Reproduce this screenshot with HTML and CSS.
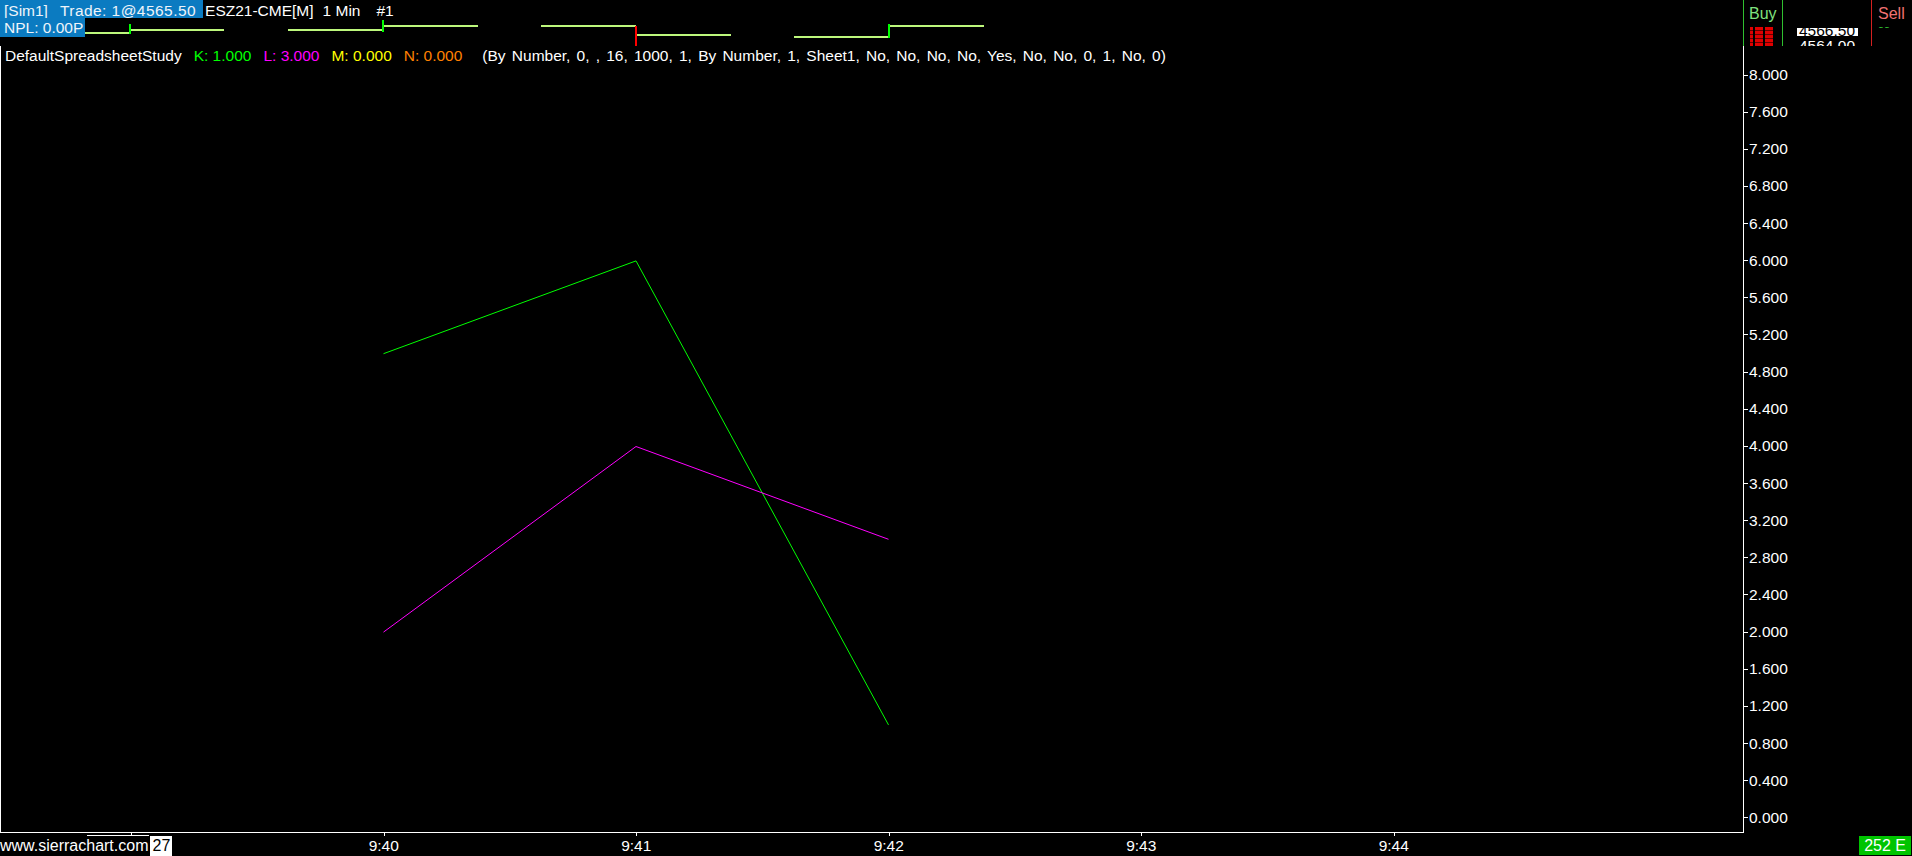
FILE: index.html
```html
<!DOCTYPE html>
<html lang="en">
<head>
    <meta charset="UTF-8">
    <title>Sierra Chart - ESZ21-CME[M] 1 Min #1</title>
    <link rel="stylesheet" href="styles.css">
</head>
<body>
<div class="chart">

    <div class="top">
        <div class="info">
            <div class="info-row row1">
                <span class="hl"><span>[Sim1]</span><span class="trade">Trade: 1@4565.50</span></span>
                <span class="sym">ESZ21-CME[M]</span>
                <span class="period">1 Min</span>
                <span class="num">#1</span>
            </div>
            <div class="info-row row2">
                <span class="hl">NPL: 0.00P</span>
            </div>

            <!-- mini bar steps -->
            <svg class="steps" width="1000" height="46" viewBox="0 0 1000 46">
                <g stroke="#bdf77c" stroke-width="2" fill="none">
                    <line x1="85" y1="33" x2="130" y2="33"/>
                    <line x1="130" y1="30" x2="224" y2="30"/>
                    <line x1="288" y1="30" x2="383" y2="30"/>
                    <line x1="383" y1="26" x2="478" y2="26"/>
                    <line x1="541" y1="26" x2="636" y2="26"/>
                    <line x1="636" y1="35" x2="731" y2="35"/>
                    <line x1="794" y1="37" x2="889" y2="37"/>
                    <line x1="889" y1="26" x2="984" y2="26"/>
                </g>
                <g stroke-width="2">
                    <line x1="130" y1="24" x2="130" y2="34" stroke="#00ff00"/>
                    <line x1="383" y1="20" x2="383" y2="32" stroke="#00ff00"/>
                    <line x1="636" y1="26" x2="636" y2="46" stroke="#ff0000"/>
                    <line x1="889" y1="24" x2="889" y2="38" stroke="#00ff00"/>
                </g>
            </svg>
        </div>

        <div class="dom">
            <div class="dom-col buy">
                <div class="dom-head">Buy</div>
                <div class="buy-qty"><span class="q1"></span><span class="q2"></span><span class="q2"></span></div>
            </div>
            <div class="dom-col price">
                <div class="ask"><span>4566.50</span></div>
                <div class="bid">4564.00</div>
            </div>
            <div class="dom-col sell">
                <div class="dom-head">Sell</div>
                <div class="sell-qty"><span>33</span></div>
            </div>
        </div>
    </div>

    <div class="main">
        <div class="plot">
            <div class="legend">
                <span class="study">DefaultSpreadsheetStudy</span>
                <span class="k">K: 1.000</span>
                <span class="l">L: 3.000</span>
                <span class="m">M: 0.000</span>
                <span class="n">N: 0.000</span>
                <span class="params">(By Number, 0, , 16, 1000, 1, By Number, 1, Sheet1, No, No, No, No, Yes, No, No, 0, 1, No, 0)</span>
            </div>
            <svg class="lines" width="1742" height="786" viewBox="0 0 1742 786">
                <polyline points="382.5,307.7 635,214.9 887.5,678.9" stroke="#00ff00" stroke-width="1" fill="none"/>
                <polyline points="382.5,586.1 635,400.5 887.5,493.3" stroke="#ff00ff" stroke-width="1" fill="none"/>
            </svg>
        </div>
        <div class="scale">
            <div class="price-label">8.000</div>
            <div class="price-label">7.600</div>
            <div class="price-label">7.200</div>
            <div class="price-label">6.800</div>
            <div class="price-label">6.400</div>
            <div class="price-label">6.000</div>
            <div class="price-label">5.600</div>
            <div class="price-label">5.200</div>
            <div class="price-label">4.800</div>
            <div class="price-label">4.400</div>
            <div class="price-label">4.000</div>
            <div class="price-label">3.600</div>
            <div class="price-label">3.200</div>
            <div class="price-label">2.800</div>
            <div class="price-label">2.400</div>
            <div class="price-label">2.000</div>
            <div class="price-label">1.600</div>
            <div class="price-label">1.200</div>
            <div class="price-label">0.800</div>
            <div class="price-label">0.400</div>
            <div class="price-label">0.000</div>
        </div>
    </div>

    <div class="bottom">
        <div class="timeaxis">
            <div class="time"></div>
            <div class="time">9:40</div>
            <div class="time">9:41</div>
            <div class="time">9:42</div>
            <div class="time">9:43</div>
            <div class="time">9:44</div>
        </div>
        <div class="brand">
            <span class="scroll-line"></span>
            <span>www.sierrachart.com</span><span class="bars">27</span>
        </div>
        <div class="counter">252 E</div>
    </div>

</div>
</body>
</html>
```

FILE: styles.css
```css
html, body {
    margin: 0;
    padding: 0;
    background-color: #000;
}

body {
    font-family: "Liberation Sans", Arial, sans-serif;
    font-size: 15.5px;
    color: #fff;
    overflow: hidden;
}

.chart {
    width: 1912px;
    height: 856px;
    display: flex;
    flex-direction: column;
}

/* ---- top strip ---- */

.top {
    height: 46px;
    display: flex;
}

.info {
    width: 1743px;
    position: relative;
    white-space: nowrap;
}

.info-row {
    display: flex;
}

.row1 {
    height: 18px;
    line-height: 22px;
}

.row2 {
    height: 19px;
    line-height: 20px;
}

.hl {
    display: inline-block;
    background-color: #0b7bc1;
    color: #eef4fa;
    padding-left: 4px;
}

.row1 .hl {
    height: 18px;
    padding-right: 7px;
}

.row2 .hl {
    height: 19px;
    padding-right: 2px;
}

.trade {
    margin-left: 12px;
    letter-spacing: 0.45px;
}

.sym {
    margin-left: 2px;
}

.period {
    margin-left: 9px;
}

.num {
    margin-left: 16px;
}

.steps {
    position: absolute;
    top: 0;
    left: 0;
}

.dom {
    flex: 1;
    display: flex;
    border-left: 1px solid #2fbf2f;
    overflow: hidden;
}

.dom-col {
    height: 46px;
    overflow: hidden;
}

.buy {
    width: 38px;
    border-right: 1px solid #2fbf2f;
}

.price {
    width: 88px;
    border-right: 1px solid #d42020;
}

.sell {
    flex: 1;
}

.dom-head {
    height: 27px;
    line-height: 28px;
    padding-left: 5px;
    font-size: 16px;
}

.buy .dom-head {
    color: #7fe27f;
}

.sell .dom-head {
    color: #f07272;
    padding-left: 6px;
}

.buy-qty {
    display: flex;
    gap: 2px;
    padding-left: 6px;
    height: 19px;
}

.buy-qty span {
    display: block;
    background-color: #e00000;
    background-image: repeating-linear-gradient(180deg, transparent 0 3px, rgba(0,0,0,0.55) 3px 4px);
}

.q1 {
    width: 3px;
}

.q2 {
    width: 8px;
}

.ask {
    width: 61px;
    height: 8px;
    margin: 28px auto 0;
    background-color: #fff;
    color: #000;
    overflow: hidden;
    text-align: center;
}

.ask span {
    display: block;
    line-height: 18px;
    margin-top: -6px;
}

.bid {
    text-align: center;
    line-height: 18px;
    margin-top: 1px;
}

.sell-qty {
    height: 3px;
    overflow: hidden;
    padding-left: 6px;
    color: #2fbf2f;
    font-size: 11px;
}

.sell-qty span {
    display: block;
    line-height: 12px;
    margin-top: -9px;
}

/* ---- chart area ---- */

.main {
    height: 787px;
    display: flex;
}

.plot {
    width: 1742px;
    height: 786px;
    border-left: 1px solid #fff;
    border-right: 1px solid #fff;
    border-bottom: 1px solid #fff;
    position: relative;
}

.legend {
    display: flex;
    gap: 12px;
    line-height: 19px;
    padding-left: 4px;
    white-space: nowrap;
    position: relative;
    z-index: 2;
}

.k { color: #00ff00; }
.l { color: #ff00ff; }
.m { color: #ffff00; }
.n { color: #ff8000; }

.params {
    margin-left: 8px;
    word-spacing: 1.9px;
}

.lines {
    position: absolute;
    top: 0;
    left: 0;
}

.scale {
    flex: 1;
    display: flex;
    flex-direction: column;
    justify-content: space-between;
    padding: 20px 0 6px;
}

.price-label {
    display: flex;
    align-items: center;
    height: 18px;
    line-height: 18px;
}

.price-label::before {
    content: "";
    width: 4px;
    height: 1px;
    background-color: #fff;
    margin-right: 1px;
}

/* ---- time axis ---- */

.bottom {
    flex: 1;
    display: flex;
    position: relative;
}

.timeaxis {
    display: grid;
    grid-template-columns: repeat(6, 252.5px);
    padding-left: 5px;
    flex: 1;
}

.time {
    position: relative;
    text-align: center;
    line-height: 20px;
    padding-top: 3px;
}

.time::before {
    content: "";
    position: absolute;
    top: 0;
    left: 50%;
    width: 1px;
    height: 3px;
    background-color: #fff;
}

.brand {
    position: absolute;
    left: 0;
    bottom: 0;
    display: flex;
    align-items: flex-end;
    line-height: 20px;
    font-size: 16px;
    background-color: #000;
}

.scroll-line {
    position: absolute;
    left: 87px;
    top: -1px;
    width: 62px;
    height: 1px;
    background-color: #fff;
}

.bars {
    background-color: #fff;
    color: #000;
    padding: 0 2px;
    margin-left: 2px;
}

.counter {
    align-self: flex-start;
    margin: 3px 1px 0 0;
    height: 19px;
    line-height: 19px;
    padding: 0 5px;
    background-color: #00c400;
    font-size: 16px;
}
```
